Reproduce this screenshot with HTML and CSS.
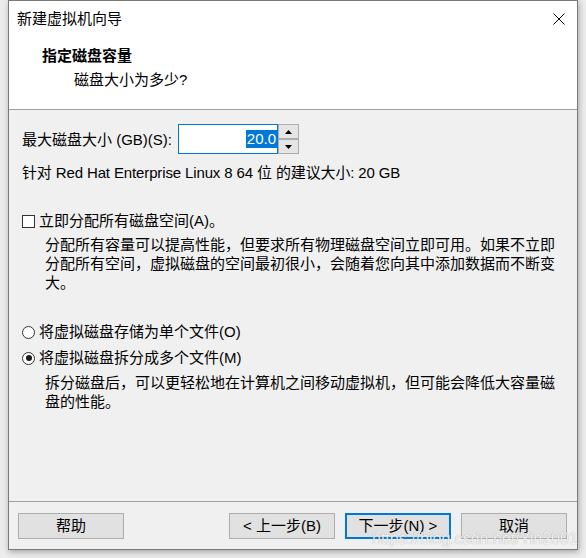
FILE: index.html
```html
<!DOCTYPE html>
<html lang="zh-CN">
<head>
<meta charset="utf-8">
<title>新建虚拟机向导</title>
<link rel="stylesheet" href="styles.css">
</head>
<body>
<div class="window">
  <div class="titlebar">
    <span class="title">新建虚拟机向导</span>
    <svg class="close" width="12" height="12" viewBox="0 0 12 12"><path d="M0.5 0.5L11.5 11.5M11.5 0.5L0.5 11.5" stroke="#000" stroke-width="1" fill="none"/></svg>
  </div>
  <div class="header">
    <div class="h-title">指定磁盘容量</div>
    <div class="h-sub">磁盘大小为多少?</div>
  </div>
  <div class="content">
    <div class="size-row">
      <span class="size-label">最大磁盘大小 (GB)(S):</span>
      <div class="spin">
        <div class="spin-input"><span class="sel">20.0</span></div>
        <div class="spin-btns">
          <div class="spin-btn"><svg width="7" height="4" viewBox="0 0 7 4"><path d="M0 4L3.5 0L7 4Z" fill="#000"/></svg></div>
          <div class="spin-btn"><svg width="7" height="4" viewBox="0 0 7 4"><path d="M0 0L3.5 4L7 0Z" fill="#000"/></svg></div>
        </div>
      </div>
    </div>
    <div class="recommend">针对 Red Hat Enterprise Linux 8 64 位 的建议大小: 20 GB</div>
    <div class="check-row"><span class="checkbox"></span><span>立即分配所有磁盘空间(A)。</span></div>
    <p class="desc desc-a">分配所有容量可以提高性能，但要求所有物理磁盘空间立即可用。如果不立即<br>分配所有空间，虚拟磁盘的空间最初很小，会随着您向其中添加数据而不断变<br>大。</p>
    <div class="radio-row radio-first"><span class="radio"></span><span>将虚拟磁盘存储为单个文件(O)</span></div>
    <div class="radio-row radio-second"><span class="radio checked"></span><span>将虚拟磁盘拆分成多个文件(M)</span></div>
    <p class="desc desc-b">拆分磁盘后，可以更轻松地在计算机之间移动虚拟机，但可能会降低大容量磁<br>盘的性能。</p>
  </div>
  <div class="footer">
    <button class="btn">帮助</button>
    <div class="nav-btns">
      <button class="btn">&lt; 上一步(B)</button>
      <button class="btn default">下一步(N) &gt;</button>
      <button class="btn">取消</button>
    </div>
  </div>
  <div class="watermark">https://blog.csdn.net/Yin2001</div>
</div>
</body>
</html>
```
FILE: styles.css
```css
* { box-sizing: border-box; }
html, body { margin: 0; }
body {
  width: 586px;
  height: 558px;
  padding-left: 8px;
  background: #ececec;
  font-family: "Liberation Sans", "Noto Sans CJK SC", sans-serif;
  font-size: 15px;
  color: #000;
  overflow: hidden;
}
.window {
  position: relative;
  width: 570px;
  height: 550px;
  border: 1px solid #7a7a7a;
  background: #f0f0f0;
  display: flex;
  flex-direction: column;
  box-shadow: 1px 2px 6px rgba(0, 0, 0, 0.3);
}
.titlebar {
  height: 36px;
  flex: none;
  background: #fff;
  display: flex;
  align-items: center;
  justify-content: space-between;
  padding: 0 12px 0 8px;
}
.title { line-height: 20px; }
.close { display: block; }
.header {
  height: 73px;
  flex: none;
  background: #fff;
  border-bottom: 1px solid #a0a0a0;
  padding: 9px 0 0 33px;
}
.h-title { font-weight: bold; line-height: 20px; }
.h-sub { line-height: 20px; margin-top: 4px; padding-left: 32px; }
.content {
  flex: 1;
  padding: 14px 10px 0 13px;
}
.size-row { display: flex; align-items: center; height: 30px; }
.size-label { width: 156px; line-height: 20px; padding-top: 2px; }
.spin { display: flex; }
.spin-input {
  width: 100px;
  height: 30px;
  border: 1px solid #0078d7;
  background: #fff;
  display: flex;
  align-items: center;
  justify-content: flex-end;
}
.sel {
  background: #0078d7;
  color: #fff;
  line-height: 18px;
  padding: 0 1px;
}
.spin-btns { display: flex; flex-direction: column; width: 21px; height: 30px; }
.spin-btn {
  flex: 1;
  border: 1px solid #adadad;
  background: #e5e5e5;
  display: flex;
  align-items: center;
  justify-content: center;
}
.spin-btn svg { display: block; }
.recommend { margin-top: 9px; line-height: 20px; letter-spacing: -0.13px; }
.check-row { margin-top: 28px; display: flex; align-items: center; line-height: 20px; }
.checkbox {
  width: 13px;
  height: 13px;
  border: 1px solid #333;
  background: #fff;
  margin-right: 4px;
  flex: none;
}
.desc { margin: 0 0 0 23px; line-height: 19px; white-space: nowrap; }
.desc-a { margin-top: 4px; }
.desc-b { margin-top: 5px; }
.radio-row { display: flex; align-items: center; line-height: 20px; }
.radio-first { margin-top: 30px; }
.radio-second { margin-top: 6px; }
.radio {
  width: 13px;
  height: 13px;
  border-radius: 50%;
  border: 1px solid #333;
  background: #fff;
  margin-right: 4px;
  flex: none;
  display: flex;
  align-items: center;
  justify-content: center;
}
.radio.checked::after {
  content: "";
  width: 6px;
  height: 6px;
  border-radius: 50%;
  background: #1a1a1a;
}
.footer {
  height: 48px;
  flex: none;
  border-top: 1px solid #a0a0a0;
  padding: 11px 10px 10px 9px;
  display: flex;
  justify-content: space-between;
}
.nav-btns { display: flex; gap: 10px; }
.btn {
  width: 106px;
  height: 26px;
  border: 1px solid #adadad;
  background: #e1e1e1;
  font: inherit;
  color: #000;
  padding: 0;
  line-height: 20px;
}
.btn.default { border: 2px solid #0078d7; }
.watermark {
  position: absolute;
  left: 363px;
  top: 529px;
  font-family: "Liberation Sans", sans-serif;
  font-size: 16px;
  line-height: 18px;
  color: rgba(255, 255, 255, 0.85);
  text-shadow: 0 0 1px rgba(0, 0, 0, 0.35);
  white-space: nowrap;
}
```
